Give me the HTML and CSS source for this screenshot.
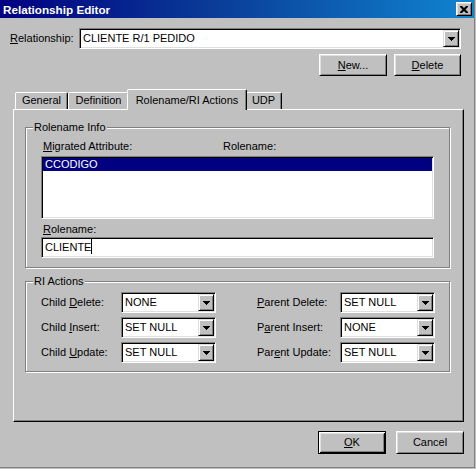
FILE: index.html
```html
<!DOCTYPE html>
<html>
<head>
<meta charset="utf-8">
<title>Relationship Editor</title>
<link rel="stylesheet" href="styles.css">
</head>
<body>
<div class="window">
  <div class="titlebar">
    <span class="title">Relationship Editor</span>
    <span class="close"><svg width="8" height="7" viewBox="0 0 8 7"><path d="M0 0h2l2 2l2-2h2v1l-2.5 2.5L8 6v1H6L4 5L2 7H0V6l2.5-2.5L0 1z" fill="#000"/></svg></span>
  </div>

  <div class="rel-row">
    <span class="rel-label"><u>R</u>elationship:</span>
    <div class="combo combo-wide">
      <span class="combo-text">CLIENTE R/1 PEDIDO</span>
      <span class="drop"><svg width="7" height="4" viewBox="0 0 7 4"><path d="M0 0h7v1h-1v1h-1v1h-1v1h-1v-1h-1v-1h-1v-1h-1z" fill="#000"/></svg></span>
    </div>
  </div>

  <div class="btn-row top-btns">
    <button class="btn btn-new"><u>N</u>ew...</button>
    <button class="btn btn-del"><u>D</u>elete</button>
  </div>

  <div class="tabs">
    <div class="tab tab-general">General</div>
    <div class="tab tab-def">Definition</div>
    <div class="tab tab-active">Rolename/RI Actions</div>
    <div class="tab tab-udp">UDP</div>
  </div>

  <div class="panel">
    <div class="group group-role">
      <div class="legend">Rolename Info</div>
      <div class="list-labels">
        <span class="lbl-migrated"><u>M</u>igrated Attribute:</span>
        <span>Rolename:</span>
      </div>
      <div class="listbox">
        <div class="list-item selected">CCODIGO</div>
      </div>
      <div class="field-label"><u>R</u>olename:</div>
      <div class="edit">CLIENTE<span class="caret"></span></div>
    </div>

    <div class="group group-ri">
      <div class="legend">RI Actions</div>
      <div class="ri-grid">
        <span class="ri-label">Child <u>D</u>elete:</span>
        <div class="combo"><span class="combo-text">NONE</span><span class="drop"><svg width="7" height="4" viewBox="0 0 7 4"><path d="M0 0h7v1h-1v1h-1v1h-1v1h-1v-1h-1v-1h-1v-1h-1z" fill="#000"/></svg></span></div>
        <span></span>
        <span class="ri-label"><u>P</u>arent Delete:</span>
        <div class="combo"><span class="combo-text">SET NULL</span><span class="drop"><svg width="7" height="4" viewBox="0 0 7 4"><path d="M0 0h7v1h-1v1h-1v1h-1v1h-1v-1h-1v-1h-1v-1h-1z" fill="#000"/></svg></span></div>

        <span class="ri-label">Child <u>I</u>nsert:</span>
        <div class="combo"><span class="combo-text">SET NULL</span><span class="drop"><svg width="7" height="4" viewBox="0 0 7 4"><path d="M0 0h7v1h-1v1h-1v1h-1v1h-1v-1h-1v-1h-1v-1h-1z" fill="#000"/></svg></span></div>
        <span></span>
        <span class="ri-label">P<u>a</u>rent Insert:</span>
        <div class="combo"><span class="combo-text">NONE</span><span class="drop"><svg width="7" height="4" viewBox="0 0 7 4"><path d="M0 0h7v1h-1v1h-1v1h-1v1h-1v-1h-1v-1h-1v-1h-1z" fill="#000"/></svg></span></div>

        <span class="ri-label">Child <u>U</u>pdate:</span>
        <div class="combo"><span class="combo-text">SET NULL</span><span class="drop"><svg width="7" height="4" viewBox="0 0 7 4"><path d="M0 0h7v1h-1v1h-1v1h-1v1h-1v-1h-1v-1h-1v-1h-1z" fill="#000"/></svg></span></div>
        <span></span>
        <span class="ri-label">Par<u>e</u>nt Update:</span>
        <div class="combo"><span class="combo-text">SET NULL</span><span class="drop"><svg width="7" height="4" viewBox="0 0 7 4"><path d="M0 0h7v1h-1v1h-1v1h-1v1h-1v-1h-1v-1h-1v-1h-1z" fill="#000"/></svg></span></div>
      </div>
    </div>
  </div>

  <div class="btn-row bottom-btns">
    <button class="btn btn-default"><u>O</u>K</button>
    <button class="btn">Cancel</button>
  </div>
</div>
</body>
</html>
```

FILE: styles.css
```css
* { box-sizing: border-box; }
html, body { margin: 0; padding: 0; }
body {
  background: #c0c0c0;
  font-family: "Liberation Sans", Arial, sans-serif;
  font-size: 11px;
  line-height: 13px;
  color: #000;
}
u { text-decoration: underline; text-underline-offset: 1px; }

.window {
  width: 475px;
  height: 468px;
  border-right: 1px solid #808080;
  border-bottom: 1px solid #808080;
  background: #c0c0c0;
  overflow: hidden;
}

/* title bar */
.titlebar {
  height: 18px;
  display: flex;
  align-items: flex-start;
  justify-content: space-between;
  background: linear-gradient(to right, #000080 0%, #0a3c98 45%, #1084d0 100%);
}
.title {
  color: #fff;
  font-weight: bold;
  font-size: 11.7px;
  line-height: 18px;
  padding: 1px 0 0 3px;
}
.close {
  width: 16px;
  height: 14px;
  margin: 2px 2px 0 0;
  display: flex;
  align-items: center;
  justify-content: center;
  background: #c0c0c0;
  border: 1px solid;
  border-color: #fff #000 #000 #fff;
  box-shadow: inset 1px 1px #dfdfdf, inset -1px -1px #808080;
}
.close svg { display: block; }

/* relationship row */
.rel-row {
  display: flex;
  align-items: center;
  height: 21px;
  margin: 10px 0 0 10px;
}
.rel-label { width: 69px; }

.combo {
  display: flex;
  height: 21px;
  background: #fff;
  border: 1px solid;
  border-color: #808080 #fff #fff #808080;
  box-shadow: inset 1px 1px #000, inset -1px -1px #dfdfdf;
  padding: 1px;
}
.combo-wide { width: 382px; }
.combo-text {
  flex: 1;
  padding-left: 2px;
  line-height: 17px;
  white-space: nowrap;
  overflow: hidden;
}
.drop {
  width: 16px;
  height: 17px;
  flex: none;
  display: flex;
  align-items: center;
  justify-content: center;
  background: #c0c0c0;
  border: 1px solid;
  border-color: #dfdfdf #000 #000 #dfdfdf;
  box-shadow: inset 1px 1px #fff, inset -1px -1px #808080;
}
.drop svg { display: block; margin-top: 1px; }

/* buttons */
.btn-row { display: flex; justify-content: flex-end; }
.top-btns { margin: 5px 13px 0 0; gap: 7px; }
.bottom-btns { margin: 9px 10px 0 0; gap: 10px; }
.btn {
  width: 68px;
  height: 23px;
  padding: 0;
  font: inherit;
  color: #000;
  background: #c0c0c0;
  border: 1px solid;
  border-color: #fff #000 #000 #fff;
  box-shadow: inset 1px 1px #dfdfdf, inset -1px -1px #808080;
}
.top-btns .btn { height: 22px; }
.btn-del { width: 67px; }
.btn-default {
  border-color: #000;
  box-shadow: inset 1px 1px #fff, inset -1px -1px #000, inset 2px 2px #dfdfdf, inset -2px -2px #808080;
}

/* tabs */
.tabs {
  display: flex;
  align-items: flex-end;
  height: 20px;
  margin: 13px 0 0 15px;
}
.tab {
  height: 17px;
  background: #c0c0c0;
  border: 1px solid;
  border-bottom: none;
  border-color: #fff #000 transparent #fff;
  border-radius: 2px 2px 0 0;
  box-shadow: inset -1px 0 #808080;
  text-align: center;
  line-height: 14px;
  white-space: nowrap;
}
.tab-general { width: 53px; }
.tab-def { width: 61px; }
.tab-udp { width: 37px; }
.tab-active {
  width: 120px;
  height: 21px;
  margin: 0 -2px -1px -2px;
  padding-top: 3px;
  position: relative;
  z-index: 2;
}

/* panel */
.panel {
  width: 451px;
  height: 313px;
  margin-left: 13px;
  border: 1px solid;
  border-color: #fff #000 #000 #fff;
  box-shadow: inset -1px -1px #808080;
  padding: 17px 0 0 11px;
}

.group {
  width: 425px;
  border: 1px solid #808080;
  box-shadow: inset 1px 1px #fff, 1px 1px #fff;
  padding-left: 15px;
}
.legend {
  display: table;
  margin: -7px 0 0 -8px;
  padding: 0 1px;
  background: #c0c0c0;
  line-height: 13px;
}
.group-role { height: 141px; }
.group-ri { height: 91px; margin-top: 13px; }

.list-labels {
  display: flex;
  margin: 6px 0 0 2px;
}
.lbl-migrated { width: 180px; }

.listbox {
  width: 393px;
  height: 63px;
  margin-top: 3px;
  background: #fff;
  border: 1px solid;
  border-color: #808080 #fff #fff #808080;
  box-shadow: inset 1px 1px #000, inset -1px -1px #dfdfdf;
  padding: 1px;
}
.list-item {
  height: 13px;
  line-height: 13px;
  padding-left: 2px;
}
.list-item.selected { background: #000080; color: #fff; }

.field-label { margin: 4px 0 0 2px; }
.edit {
  width: 393px;
  height: 21px;
  margin-top: 1px;
  background: #fff;
  border: 1px solid;
  border-color: #808080 #fff #fff #808080;
  box-shadow: inset 1px 1px #000, inset -1px -1px #dfdfdf;
  padding: 1px 0 0 3px;
  line-height: 17px;
}
.caret {
  display: inline-block;
  width: 1px;
  height: 15px;
  background: #000;
  vertical-align: -3px;
}

.ri-grid {
  display: grid;
  grid-template-columns: 80px 95px 41px 83px 95px;
  grid-auto-rows: 21px;
  row-gap: 4px;
  margin-top: 4px;
  align-items: center;
}
```
